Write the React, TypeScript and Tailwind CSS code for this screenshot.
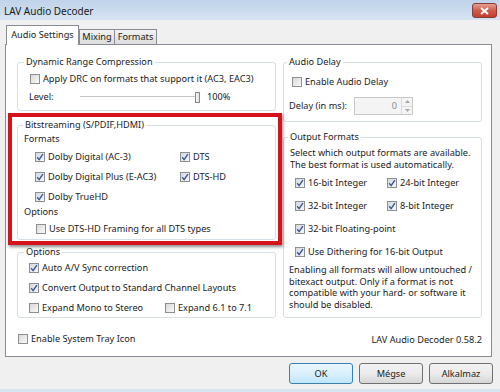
import React from "react";

function Box({ checked }: { checked?: boolean }) {
  return (
    <span
      className={`relative flex h-[10px] w-[10px] shrink-0 items-center justify-center border border-[#8e8f8f] ${
        checked ? "bg-gradient-to-br from-[#d3d8e2] to-[#f6f7fa]" : "bg-gradient-to-br from-[#d9d9d9] to-[#fafafa]"
      }`}
    >
      {checked && (
        <svg width="8" height="8" viewBox="0 0 8 8" className="absolute left-[0px] top-[0px]">
          <path d="M1.2 4.3 L3.1 6.6 L6.9 1.1" fill="none" stroke="#3a5690" strokeWidth="1.4" />
        </svg>
      )}
    </span>
  );
}

function Check({ label, checked, className = "" }: { label: string; checked?: boolean; className?: string }) {
  return (
    <label className={`flex h-[14px] items-center gap-[3px] whitespace-nowrap ${className}`}>
      <Box checked={checked} />
      <span>{label}</span>
    </label>
  );
}

function Group({
  title,
  className = "",
  legend = "ml-[6px]",
  children,
}: {
  title: string;
  className?: string;
  legend?: string;
  children: React.ReactNode;
}) {
  return (
    <fieldset className={`rounded-[3px] border border-[#d5dfe5] ${className}`}>
      <legend className={`px-[2px] leading-[12px] ${legend}`}>{title}</legend>
      {children}
    </fieldset>
  );
}

function Button({ label, primary }: { label: string; primary?: boolean }) {
  return (
    <button
      className={`h-[21px] w-[64px] rounded-[3px] border leading-[19px] ${
        primary
          ? "border-[#3c7fb1] bg-gradient-to-b from-[#eaf6fd] via-[#d9f0fc] to-[#bee6fd]"
          : "border-[#707070] bg-gradient-to-b from-[#f2f2f2] via-[#ebebeb] to-[#d6d6d6]"
      }`}
    >
      {label}
    </button>
  );
}

export default function App() {
  return (
    <div className="relative flex h-[392px] w-[500px] flex-col overflow-hidden bg-[#f0f0f0] font-['Noto_Sans',sans-serif] text-[9.2px] text-[#1c1c1c]">
      {/* Title bar */}
      <div className="flex h-[20px] shrink-0 items-start justify-between bg-gradient-to-b from-[#c0d3ea] to-[#d6e3f2]">
        <span className="pl-[4px] pt-[4px] text-[10px] leading-[14px] text-[#1a1a1a]">LAV Audio Decoder</span>
        <span className="mr-[3px] mt-[3px] flex h-[15px] w-[25px] items-center justify-center rounded-[3px] border border-[#8b3a34] bg-gradient-to-b from-[#e5a093] via-[#cf5b4c] to-[#c2402f]">
          <svg width="9" height="8" viewBox="0 0 9 8">
            <path d="M1 1 L8 7 M8 1 L1 7" stroke="#fff" strokeWidth="2" />
          </svg>
        </span>
      </div>

      {/* Tabs */}
      <div className="ml-[6px] mt-[5px] flex items-end">
        <div className="relative z-10 -mb-px flex h-[20px] w-[73px] items-center justify-center border border-b-0 border-[#898c95] bg-white pb-[2px]">
          Audio Settings
        </div>
        <div className="flex h-[15px] w-[36px] items-center justify-center border border-b-0 border-[#898c95] bg-gradient-to-b from-[#f2f2f2] to-[#dcdcdc]">
          Mixing
        </div>
        <div className="-ml-px flex h-[15px] w-[43px] items-center justify-center border border-b-0 border-[#898c95] bg-gradient-to-b from-[#f2f2f2] to-[#dcdcdc]">
          Formats
        </div>
      </div>

      {/* Tab page */}
      <div className="ml-[5px] flex h-[313px] w-[487px] flex-col border border-[#898c95] bg-white pl-[11px] pr-[9px] pt-[11px]">
        <div className="flex gap-[7px]">
          {/* Left column */}
          <div className="flex w-[259px] flex-col">
            <Group title="Dynamic Range Compression" className="pb-[6px]">
              <Check className="ml-[12px] mt-[4px]" label="Apply DRC on formats that support it (AC3, EAC3)" />
              <div className="ml-[11px] mt-[4px] flex h-[14px] items-center">
                <span className="w-[51px]">Level:</span>
                <div className="relative flex h-[12px] w-[120px] items-center">
                  <div className="h-[2px] w-full border-b border-t border-b-white border-t-[#c4c4c4] bg-[#e7eaea]" />
                  <div className="absolute right-0 top-[1px] h-[11px] w-[5px] border border-[#8b8b8b] bg-gradient-to-r from-[#f7f7f7] to-[#e2e2e2]" />
                </div>
                <span className="ml-[7px]">100%</span>
              </div>
            </Group>

            <Group title="Bitstreaming (S/PDIF,HDMI)" className="mt-[8px] pb-[3px]" legend="ml-[5px]">
              <div className="ml-[6px] mt-[2px] leading-[12px]">Formats</div>
              <div className="ml-[17px] mt-[5px] flex flex-col gap-[6px]">
                <div className="flex">
                  <Check className="w-[145px]" checked label="Dolby Digital (AC-3)" />
                  <Check checked label="DTS" />
                </div>
                <div className="flex">
                  <Check className="w-[145px]" checked label="Dolby Digital Plus (E-AC3)" />
                  <Check checked label="DTS-HD" />
                </div>
                <Check checked label="Dolby TrueHD" />
              </div>
              <div className="ml-[6px] mt-[2px] leading-[12px]">Options</div>
              <Check className="ml-[18px] mt-[4px]" label="Use DTS-HD Framing for all DTS types" />
            </Group>

            <Group title="Options" className="mt-[6px] pb-[2px]">
              <div className="ml-[11px] mt-[3px] flex flex-col gap-[6px]">
                <Check checked label="Auto A/V Sync correction" />
                <Check checked label="Convert Output to Standard Channel Layouts" />
                <div className="flex">
                  <Check className="w-[136px]" label="Expand Mono to Stereo" />
                  <Check label="Expand 6.1 to 7.1" />
                </div>
              </div>
            </Group>

            <Check className="ml-[1px] mt-[14px]" label="Enable System Tray Icon" />
          </div>

          {/* Right column */}
          <div className="flex w-[199px] flex-col">
            <Group title="Audio Delay" className="pb-[6px]" legend="ml-[3px]">
              <Check className="ml-[8px] mt-[7px]" label="Enable Audio Delay" />
              <div className="ml-[5px] mt-[8px] flex h-[18px] items-center">
                <span className="w-[65px]">Delay (in ms):</span>
                <div className="flex h-[18px] w-[59px] border border-[#c9c9c9] bg-[#f4f4f4]">
                  <span className="flex-1 pr-[4px] text-right leading-[16px] text-[#8d8d8d]">0</span>
                  <div className="flex w-[11px] flex-col border-l border-[#dcdcdc]">
                    <span className="flex flex-1 items-center justify-center border-b border-[#dcdcdc]">
                      <svg width="5" height="3" viewBox="0 0 5 3">
                        <path d="M0 3 L2.5 0 L5 3 Z" fill="#a8a8a8" />
                      </svg>
                    </span>
                    <span className="flex flex-1 items-center justify-center">
                      <svg width="5" height="3" viewBox="0 0 5 3">
                        <path d="M0 0 L2.5 3 L5 0 Z" fill="#a8a8a8" />
                      </svg>
                    </span>
                  </div>
                </div>
              </div>
            </Group>

            <Group title="Output Formats" className="mt-[9px] pb-[6px]" legend="ml-[4px]">
              <p className="ml-[6px] mt-[4px] leading-[11.5px]">
                Select which output formats are available.
                <br />
                The best format is used automatically.
              </p>
              <div className="ml-[11px] mt-[6px] flex flex-col gap-[9px]">
                <div className="flex">
                  <Check className="w-[92px]" checked label="16-bit Integer" />
                  <Check checked label="24-bit Integer" />
                </div>
                <div className="flex">
                  <Check className="w-[92px]" checked label="32-bit Integer" />
                  <Check checked label="8-bit Integer" />
                </div>
                <Check checked label="32-bit Floating-point" />
                <Check checked label="Use Dithering for 16-bit Output" />
              </div>
              <p className="ml-[5px] mt-[5px] leading-[11.7px]">
                Enabling all formats will allow untouched /
                <br />
                bitexact output. Only if a format is not
                <br />
                compatible with your hard- or software it
                <br />
                should be disabled.
              </p>
            </Group>

            <div className="mt-[16px] text-right leading-[12px]">LAV Audio Decoder 0.58.2</div>
          </div>
        </div>
      </div>

      {/* Buttons */}
      <div className="mr-[7px] mt-[6px] flex justify-end gap-[6px]">
        <Button label="OK" primary />
        <Button label="Mégse" />
        <Button label="Alkalmaz" />
      </div>

      {/* Window frame bottom edge */}
      <div className="mt-auto h-[3px] bg-[#d9e4f1]" />

      {/* Highlight annotation */}
      <div className="pointer-events-none absolute left-[8px] top-[113px] h-[132px] w-[274px] border-[4px] border-[#d3141c] shadow-[1px_2px_3px_rgba(0,0,0,0.45)]" />
    </div>
  );
}
